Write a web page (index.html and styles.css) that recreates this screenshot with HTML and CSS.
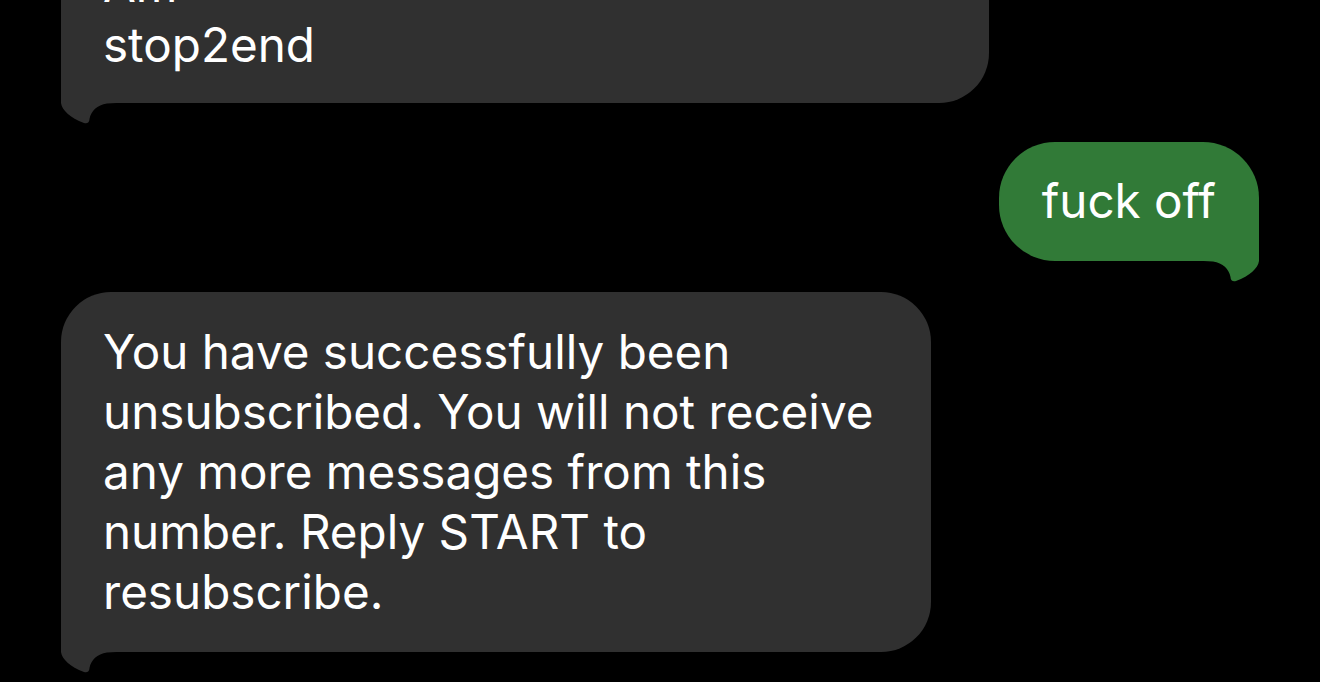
FILE: index.html
```html
<!DOCTYPE html>
<html lang="en">
<head>
  <meta charset="UTF-8" />
  <title>Messages</title>
  <link rel="stylesheet" href="styles.css">
</head>
<body>
  <div class="thread">

    <div class="msg recibido primero">
      <p>Am<br>stop2end</p>
      <svg class="cola" width="70" height="26" viewBox="0 -2 70 26">
        <path d="M0 -2 V0 C1 7 9 15 23 20 C26 21 28.5 19.5 28.5 16 C30 8 36 2 46 0.5 C52 0 58 0 66 0 V-2 Z" />
      </svg>
    </div>

    <div class="msg enviado">
      <p>fuck off</p>
      <svg class="cola" width="70" height="26" viewBox="0 -2 70 26">
        <path d="M0 -2 V0 C1 7 9 15 23 20 C26 21 28.5 19.5 28.5 16 C30 8 36 2 46 0.5 C52 0 58 0 66 0 V-2 Z" />
      </svg>
    </div>

    <div class="msg recibido largo">
      <p>You have successfully been<br>unsubscribed. You will not receive<br>any more messages from this<br>number. Reply START to<br>resubscribe.</p>
      <svg class="cola" width="70" height="26" viewBox="0 -2 70 26">
        <path d="M0 -2 V0 C1 7 9 15 23 20 C26 21 28.5 19.5 28.5 16 C30 8 36 2 46 0.5 C52 0 58 0 66 0 V-2 Z" />
      </svg>
    </div>

  </div>
</body>
</html>
```

FILE: styles.css
```css
html, body {
  background: #000;
}

body {
  margin: 0;
  min-height: 682px;
  color: #fff;
  font-family: Inter, 'Liberation Sans', sans-serif;
}

.thread {
  display: flex;
  flex-direction: column;
  padding: 0 61px 30px;
}

.msg {
  position: relative;
  box-sizing: border-box;
  padding: 30px 43px 30px 42px;
  border-radius: 50px;
}

.msg p {
  margin: 0;
  font-size: 47.6px;
  line-height: 60px;
}

.recibido {
  align-self: flex-start;
  background: #303030;
  fill: #303030;
  border-bottom-left-radius: 0;
}

.enviado {
  align-self: flex-end;
  background: #317a37;
  fill: #317a37;
  margin-top: 39px;
  padding: 29px 43px 30px 43px;
  border-radius: 56px;
  border-bottom-right-radius: 0;
}

.primero {
  width: 928px;
  margin-top: -75px;
  padding-bottom: 28px;
}

.largo {
  width: 870px;
  margin-top: 31px;
}

.cola {
  position: absolute;
  left: 0;
  top: calc(100% - 2px);
}

.enviado .cola {
  left: auto;
  right: 0;
  transform: scaleX(-1);
}
```
